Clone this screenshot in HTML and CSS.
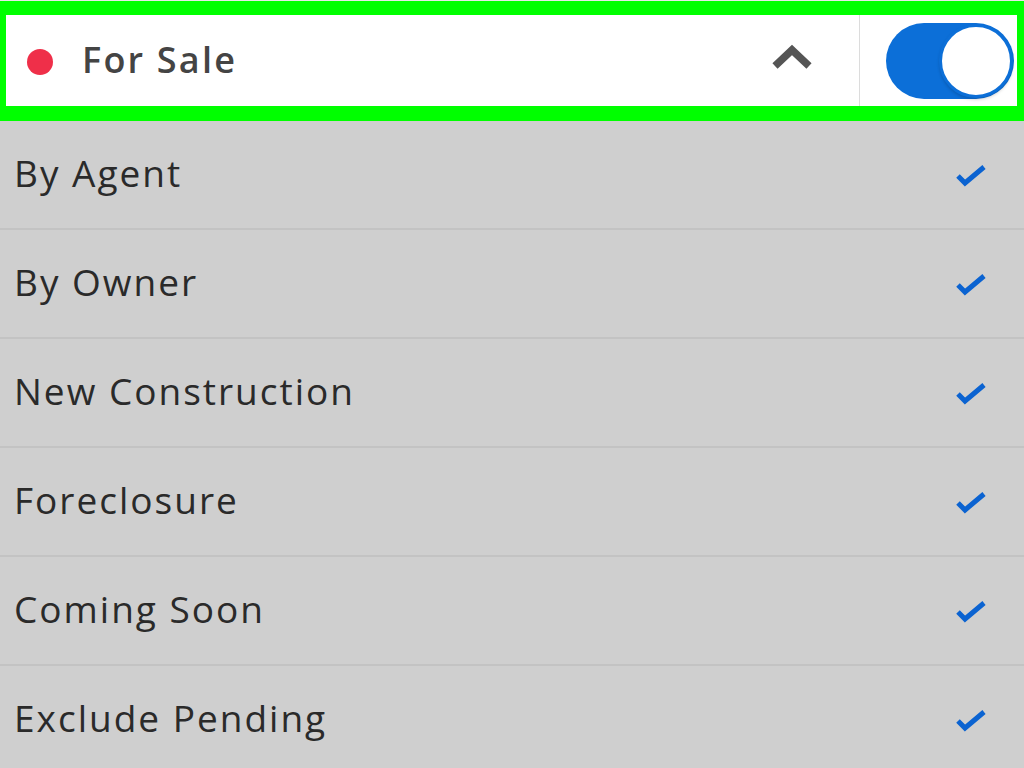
FILE: index.html
```html
<!DOCTYPE html>
<html>
<head>
<meta charset="utf-8">
<link rel="stylesheet" href="styles.css">
</head>
<body>
<header class="filter-head">
  <div class="head-main">
    <span class="dot"></span>
    <span class="head-title">For Sale</span>
    <svg class="chevron" width="42" height="30" viewBox="0 0 42 30"><polyline points="4,23 21,7 38,23" fill="none" stroke="#555" stroke-width="7.5"/></svg>
  </div>
  <div class="head-toggle">
    <div class="toggle"><span class="knob"></span></div>
  </div>
</header>
<ul class="options">
  <li class="option"><span class="label">By Agent</span><svg class="check" width="34" height="28" viewBox="0 0 34 28"><polyline points="4,14 11,21 30,5" fill="none" stroke="#0b63d1" stroke-width="5"/></svg></li>
  <li class="option"><span class="label">By Owner</span><svg class="check" width="34" height="28" viewBox="0 0 34 28"><polyline points="4,14 11,21 30,5" fill="none" stroke="#0b63d1" stroke-width="5"/></svg></li>
  <li class="option"><span class="label">New Construction</span><svg class="check" width="34" height="28" viewBox="0 0 34 28"><polyline points="4,14 11,21 30,5" fill="none" stroke="#0b63d1" stroke-width="5"/></svg></li>
  <li class="option"><span class="label">Foreclosure</span><svg class="check" width="34" height="28" viewBox="0 0 34 28"><polyline points="4,14 11,21 30,5" fill="none" stroke="#0b63d1" stroke-width="5"/></svg></li>
  <li class="option"><span class="label">Coming Soon</span><svg class="check" width="34" height="28" viewBox="0 0 34 28"><polyline points="4,14 11,21 30,5" fill="none" stroke="#0b63d1" stroke-width="5"/></svg></li>
  <li class="option"><span class="label">Exclude Pending</span><svg class="check" width="34" height="28" viewBox="0 0 34 28"><polyline points="4,14 11,21 30,5" fill="none" stroke="#0b63d1" stroke-width="5"/></svg></li>
</ul>
</body>
</html>
```
FILE: styles.css
```css
html, body {
  margin: 0;
  padding: 0;
}
body {
  width: 1024px;
  height: 768px;
  overflow: hidden;
  background: #cfcfcf;
  font-family: "Open Sans", "Liberation Sans", sans-serif;
  border-top: 1px solid #e8e8e8;
  box-sizing: border-box;
}
.filter-head {
  display: flex;
  height: 91px;
  background: #fff;
  border-style: solid;
  border-color: #00ff00;
  border-width: 14px 7px 15px 6px;
}
.head-main {
  flex: 1;
  display: flex;
  align-items: center;
  padding-left: 21px;
  padding-right: 46px;
  border-right: 1px solid #dcdcdc;
}
.dot {
  width: 26px;
  height: 26px;
  border-radius: 50%;
  background: #ef2f49;
  flex: none;
  margin-top: 2px;
}
.head-title {
  margin-left: 29px;
  margin-top: -2px;
  font-size: 36px;
  font-weight: 600;
  letter-spacing: 2.2px;
  color: #444;
  flex: 1;
}
.chevron {
  flex: none;
  margin-top: -5px;
}
.head-toggle {
  width: 157px;
  display: flex;
  align-items: center;
  padding-left: 26px;
  box-sizing: border-box;
}
.toggle {
  width: 128px;
  height: 76px;
  border-radius: 38px;
  background: #0c6fd8;
  position: relative;
}
.knob {
  position: absolute;
  right: 1px;
  top: 1px;
  width: 68px;
  height: 68px;
  border-radius: 50%;
  background: #fff;
  border: 3px solid #0c6fd8;
  box-shadow: 0 2px 3px rgba(0,0,0,0.15);
}
.options {
  list-style: none;
  margin: 0;
  padding: 0;
}
.option {
  display: flex;
  align-items: center;
  justify-content: space-between;
  height: 107px;
  border-bottom: 2px solid #c3c3c3;
  padding: 0 36px 0 14px;
  font-size: 37px;
  letter-spacing: 2px;
  color: #2a2a2a;
}
.label {
  margin-top: -4px;
}
.check {
  flex: none;
  margin-top: 2px;
}
```
